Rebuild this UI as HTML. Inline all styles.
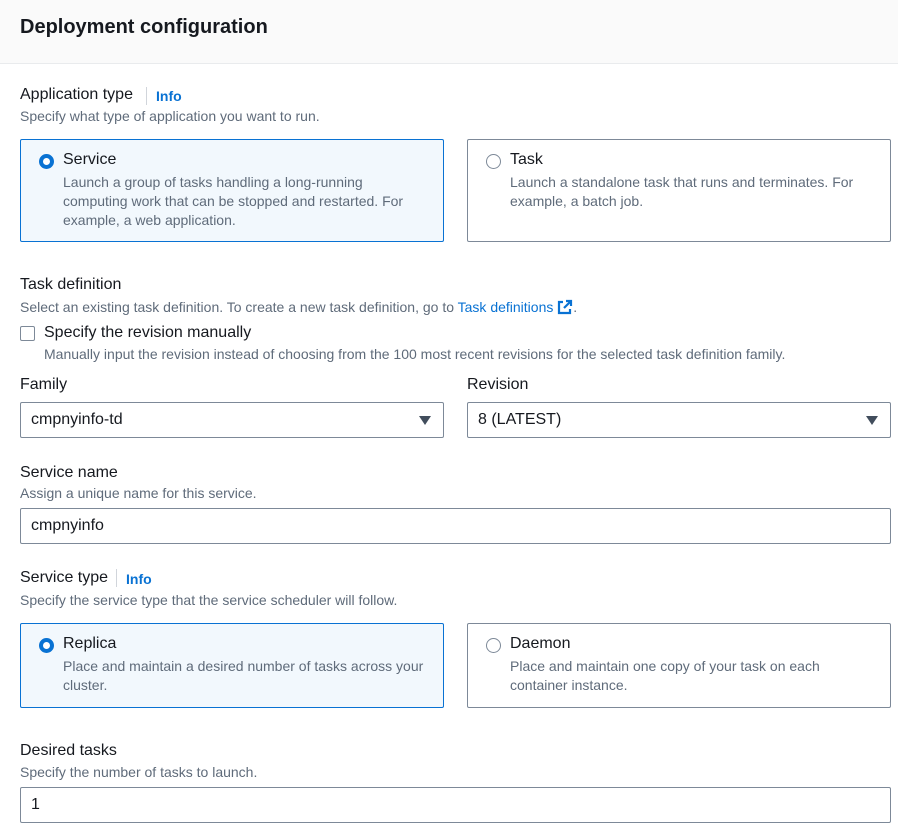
<!DOCTYPE html>
<html><head><meta charset="utf-8"><style>
*{box-sizing:border-box;margin:0;padding:0}
body{width:898px;height:833px;background:#fff;font-family:"Liberation Sans",sans-serif;color:#16191f;position:relative;overflow:hidden}
.a{position:absolute;white-space:nowrap}
.hdr{position:absolute;left:0;top:0;width:898px;height:64px;background:#fafafa;border-bottom:1px solid #e9ebed}
.h{font-size:20px;font-weight:bold;left:20px;top:16px}
.lbl{font-size:16px;color:#16191f}
.d{font-size:14px;color:#5f6b7a}
.info{font-size:14px;font-weight:bold;color:#0972d3}
.sep{position:absolute;width:1px;height:18px;background:#d1d5db}
.tile{position:absolute;border:1px solid #7d8998;border-radius:2px;background:#fff}
.tile.sel{border-color:#0972d3;background:#f2f8fd}
.rad{position:absolute;left:18px;top:14px;width:15px;height:15px;border-radius:50%;border:1.5px solid #7d8998;background:#fff}
.sel .rad{border:4px solid #0972d3}
.tt{position:absolute;left:42px;top:11px;font-size:16px}
.td{position:absolute;left:42px;top:33px;font-size:14px;color:#5f6b7a;line-height:19px;white-space:normal}
.inp{position:absolute;border:1px solid #7d8998;border-radius:2px;height:36px;font-size:16px;padding:8px 10px}
.tri{position:absolute;right:12px;top:13px;width:0;height:0;border-left:6px solid transparent;border-right:6px solid transparent;border-top:9px solid #414d5c}
</style></head><body>
<div class="hdr"></div>
<div class="a h">Deployment configuration</div>

<div class="a lbl" style="left:20px;top:86px">Application type</div>
<div class="sep" style="left:146px;top:87px"></div>
<div class="a info" style="left:156px;top:88px">Info</div>
<div class="a d" style="left:20px;top:108px">Specify what type of application you want to run.</div>

<div class="tile sel" style="left:20px;top:139px;width:424px;height:103px">
<div class="rad"></div><div class="tt">Service</div>
<div class="td" style="width:345px">Launch a group of tasks handling a long-running computing work that can be stopped and restarted. For example, a web application.</div></div>
<div class="tile" style="left:467px;top:139px;width:424px;height:103px">
<div class="rad"></div><div class="tt">Task</div>
<div class="td" style="width:350px">Launch a standalone task that runs and terminates. For example, a batch job.</div></div>

<div class="a lbl" style="left:20px;top:276px">Task definition</div>
<div class="a d" style="left:20px;top:299px">Select an existing task definition. To create a new task definition, go to <span style="color:#0972d3">Task definitions</span> <svg width="16" height="16" viewBox="0 0 16 16" style="vertical-align:-3px"><path d="M9 2h5v5M14 2 7 9M6 3H2v11h11v-4" fill="none" stroke="#0972d3" stroke-width="2.2"/></svg>.</div>
<div class="a" style="left:20px;top:326px;width:15px;height:15px;border:1.5px solid #7d8998;border-radius:2px"></div>
<div class="a lbl" style="left:44px;top:324px">Specify the revision manually</div>
<div class="a d" style="left:44px;top:346px">Manually input the revision instead of choosing from the 100 most recent revisions for the selected task definition family.</div>

<div class="a lbl" style="left:20px;top:376px">Family</div>
<div class="a lbl" style="left:467px;top:376px">Revision</div>
<div class="inp" style="left:20px;top:402px;width:424px">cmpnyinfo-td<div class="tri"></div></div>
<div class="inp" style="left:467px;top:402px;width:424px">8 (LATEST)<div class="tri"></div></div>

<div class="a lbl" style="left:20px;top:464px">Service name</div>
<div class="a d" style="left:20px;top:485px">Assign a unique name for this service.</div>
<div class="inp" style="left:20px;top:508px;width:871px">cmpnyinfo</div>

<div class="a lbl" style="left:20px;top:569px">Service type</div>
<div class="sep" style="left:116px;top:569px"></div>
<div class="a info" style="left:126px;top:571px">Info</div>
<div class="a d" style="left:20px;top:592px">Specify the service type that the service scheduler will follow.</div>

<div class="tile sel" style="left:20px;top:623px;width:424px;height:85px">
<div class="rad"></div><div class="tt">Replica</div>
<div class="td" style="width:372px">Place and maintain a desired number of tasks across your cluster.</div></div>
<div class="tile" style="left:467px;top:623px;width:424px;height:85px">
<div class="rad"></div><div class="tt">Daemon</div>
<div class="td" style="width:320px">Place and maintain one copy of your task on each container instance.</div></div>

<div class="a lbl" style="left:20px;top:742px">Desired tasks</div>
<div class="a d" style="left:20px;top:764px">Specify the number of tasks to launch.</div>
<div class="inp" style="left:20px;top:787px;width:871px">1</div>
</body></html>
